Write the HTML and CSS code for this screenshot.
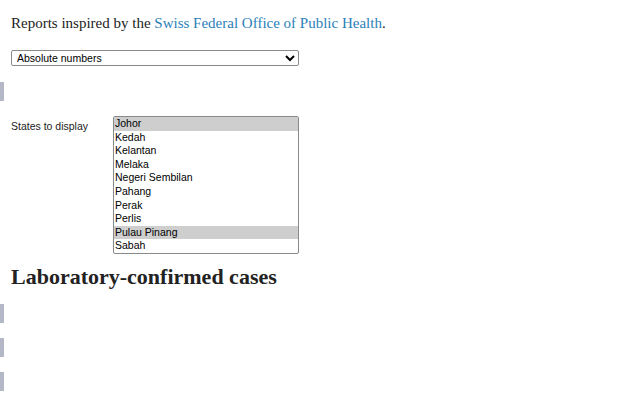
FILE: index.html
```html
<!DOCTYPE html>
<html>
<head>
<meta charset="utf-8">
<link rel="stylesheet" href="styles.css">
</head>
<body>
<p class="intro">Reports inspired by the <a href="#">Swiss Federal Office of Public Health</a>.</p>
<div class="row">
  <select class="mode">
    <option>Absolute numbers</option>
    <option>Per 100k inhabitants</option>
  </select>
</div>
<div class="bar bar-first"></div>
<div class="states">
  <label class="label">States to display</label>
  <select class="list" multiple size="10">
    <option selected>Johor</option>
    <option>Kedah</option>
    <option>Kelantan</option>
    <option>Melaka</option>
    <option>Negeri Sembilan</option>
    <option>Pahang</option>
    <option>Perak</option>
    <option>Perlis</option>
    <option selected>Pulau Pinang</option>
    <option>Sabah</option>
    <option>Sarawak</option>
    <option>Selangor</option>
    <option>Terengganu</option>
    <option>W.P. Kuala Lumpur</option>
  </select>
</div>
<h2 class="title">Laboratory-confirmed cases</h2>
<div class="charts">
  <div class="bar"></div>
  <div class="bar"></div>
  <div class="bar"></div>
</div>
</body>
</html>
```
FILE: styles.css
```css
html, body {
  margin: 0;
  padding: 0;
  background: #ffffff;
}
body {
  font-family: "Liberation Serif", serif;
  color: #222222;
}
.intro {
  margin: 0;
  padding: 13px 11px 0;
  font-size: 15px;
  line-height: 20px;
}
.intro a {
  color: #2c7fb8;
  text-decoration: none;
}
.row {
  padding: 17px 11px 0;
  display: flex;
}
.mode {
  width: 288px;
  height: 16px;
  font-family: "Liberation Sans", Arial, sans-serif;
  font-size: 10.5px;
  padding: 0 0 0 1px;
  border: 1px solid #8a8a8a;
  border-radius: 2px;
  background: #ffffff;
  color: #000000;
}
.bar {
  width: 4px;
  height: 19px;
  background: #b3b7c6;
}
.bar-first {
  margin-top: 16px;
}
.states {
  display: flex;
  align-items: flex-start;
  padding: 15px 11px 0;
}
.label {
  width: 102px;
  font-family: "Liberation Sans", Arial, sans-serif;
  font-size: 10.5px;
  padding-top: 4px;
  color: #222222;
}
.list {
  width: 186px;
  height: 138px;
  font-family: "Liberation Sans", Arial, sans-serif;
  font-size: 10.5px;
  border: 1px solid #8a8a8a;
  padding: 0;
  overflow: hidden;
  color: #000000;
}
.list option {
  padding: 0 1px;
  line-height: 13.6px;
  min-height: 13.6px;
}
.list option:checked {
  background: #cecece;
  color: #000000;
}
.title {
  margin: 11px 0 0;
  padding: 0 11px;
  font-size: 22px;
  line-height: 24px;
  font-weight: bold;
  color: #222222;
}
.charts {
  display: flex;
  flex-direction: column;
  gap: 15px;
  padding-top: 15px;
}
```
